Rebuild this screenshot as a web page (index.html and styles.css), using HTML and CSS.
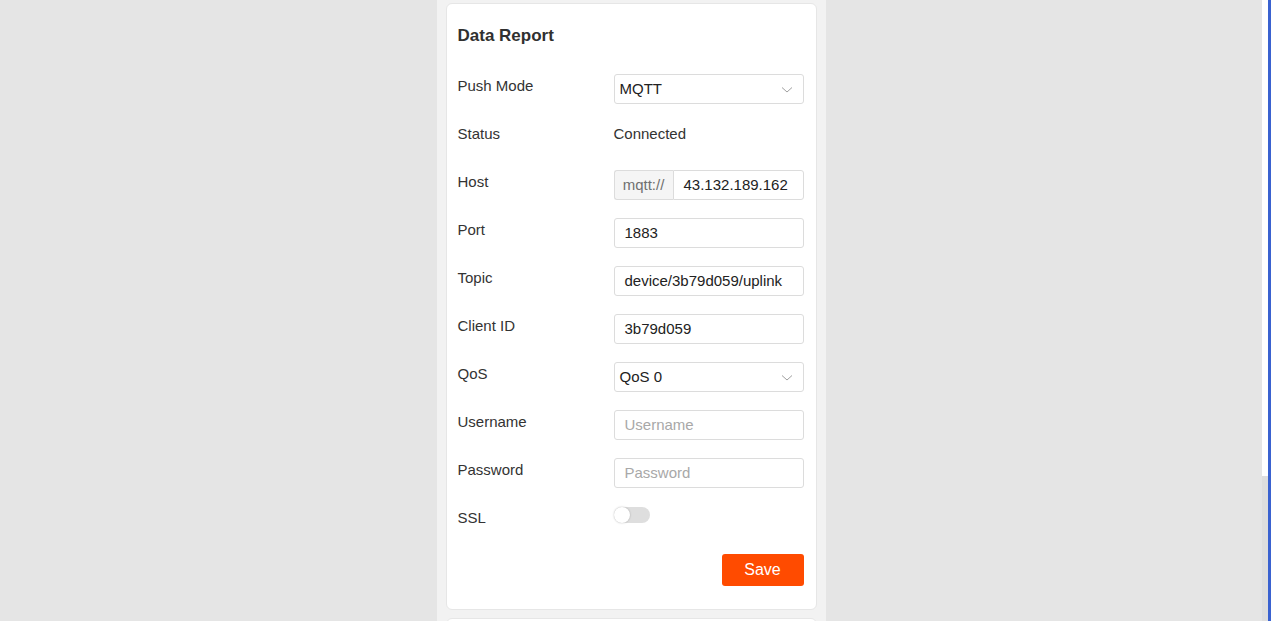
FILE: index.html
```html
<!DOCTYPE html>
<html>
<head>
<meta charset="utf-8">
<link rel="stylesheet" href="styles.css">
</head>
<body>
<div class="layout">
  <main class="main">
    <div class="column">
      <section class="card">
        <h2 class="title">Data Report</h2>
        <div class="form">
          <div class="row">
            <label class="label">Push Mode</label>
            <div class="control select"><span>MQTT</span>
              <svg class="chev" width="12" height="8" viewBox="0 0 12 8"><path d="M1 1.5 L6 6 L11 1.5" fill="none" stroke="#a0a0a0" stroke-width="1"/></svg>
            </div>
          </div>
          <div class="row">
            <label class="label">Status</label>
            <div class="value">Connected</div>
          </div>
          <div class="row">
            <label class="label">Host</label>
            <div class="group">
              <span class="prefix">mqtt://</span>
              <span class="control grouped">43.132.189.162</span>
            </div>
          </div>
          <div class="row">
            <label class="label">Port</label>
            <div class="control input">1883</div>
          </div>
          <div class="row">
            <label class="label">Topic</label>
            <div class="control input">device/3b79d059/uplink</div>
          </div>
          <div class="row">
            <label class="label">Client ID</label>
            <div class="control input">3b79d059</div>
          </div>
          <div class="row">
            <label class="label">QoS</label>
            <div class="control select"><span>QoS 0</span>
              <svg class="chev" width="12" height="8" viewBox="0 0 12 8"><path d="M1 1.5 L6 6 L11 1.5" fill="none" stroke="#a0a0a0" stroke-width="1"/></svg>
            </div>
          </div>
          <div class="row">
            <label class="label">Username</label>
            <div class="control input placeholder">Username</div>
          </div>
          <div class="row">
            <label class="label">Password</label>
            <div class="control input placeholder">Password</div>
          </div>
          <div class="row">
            <label class="label">SSL</label>
            <div class="switch"><span class="knob"></span></div>
          </div>
        </div>
        <div class="actions">
          <button class="save">Save</button>
        </div>
      </section>
      <section class="card next"></section>
    </div>
  </main>
  <aside class="edge">
    <div class="edge-strip"><div class="edge-top"></div><div class="edge-bottom"></div></div>
    <div class="edge-blue"></div>
  </aside>
</div>
</body>
</html>
```
FILE: styles.css
```css
* { box-sizing: border-box; }
html, body { margin: 0; padding: 0; }
body {
  background: #e5e5e5;
  font-family: "Liberation Sans", Arial, sans-serif;
  color: #333;
  height: 621px;
  overflow: hidden;
}
.layout { display: flex; height: 621px; }
.main { flex: 1; display: flex; justify-content: center; }
.column {
  width: 389px;
  background: #f2f2f2;
  padding: 3px 9px 0 9px;
  height: 621px;
  overflow: hidden;
}
.card {
  background: #fff;
  border: 1px solid #e6e6e6;
  border-radius: 6px;
  padding: 20px 12px 23px 11px;
}
.card.next { margin-top: 8px; height: 40px; }
.title {
  margin: 0 0 26px 0;
  font-size: 17px;
  font-weight: bold;
  line-height: 24px;
  color: #303030;
}
.form { display: flex; flex-direction: column; gap: 18px; }
.row {
  display: grid;
  grid-template-columns: 156px 190px;
  height: 30px;
  align-items: start;
}
.label { font-size: 15px; line-height: 24px; color: #333; }
.value { font-size: 15px; line-height: 24px; color: #333; }
.control {
  height: 30px;
  border: 1px solid #dcdcdc;
  border-radius: 3px;
  font-size: 15px;
  line-height: 28px;
  color: #222;
  white-space: nowrap;
  overflow: hidden;
  background: #fff;
}
.input { padding: 0 6px 0 10px; }
.placeholder { color: #a8a8a8; }
.select {
  display: flex;
  justify-content: space-between;
  align-items: center;
  padding: 0 10px 0 5px;
}
.select span { line-height: 28px; }
.chev { display: block; margin-top: 1px; }
.group { display: flex; height: 30px; }
.prefix {
  width: 59px;
  height: 30px;
  border: 1px solid #dcdcdc;
  border-right: none;
  border-radius: 3px 0 0 3px;
  background: #f5f5f5;
  color: #707070;
  font-size: 15px;
  line-height: 28px;
  text-align: center;
}
.grouped {
  flex: 1;
  border-radius: 0 3px 3px 0;
  padding: 0 6px 0 10px;
}
.switch {
  width: 36px;
  height: 16px;
  margin-top: 1px;
  border-radius: 8px;
  background: #dedede;
  position: relative;
}
.knob {
  position: absolute;
  left: 0;
  top: 0;
  width: 16px;
  height: 16px;
  border-radius: 50%;
  background: #fff;
  box-shadow: 0 0 2px rgba(0,0,0,0.25);
}
.actions { display: flex; justify-content: flex-end; margin-top: 18px; }
.save {
  width: 82px;
  height: 32px;
  border: none;
  border-radius: 3px;
  background: #ff4b00;
  color: #fff;
  font-family: "Liberation Sans", Arial, sans-serif;
  font-size: 16px;
  padding: 0;
}
.edge { display: flex; width: 9px; height: 621px; }
.edge-strip { width: 6px; display: flex; flex-direction: column; }
.edge-top { height: 476px; background: #fff; }
.edge-bottom { flex: 1; background: #dedede; }
.edge-blue { width: 3px; background: #3a62d0; }
```
